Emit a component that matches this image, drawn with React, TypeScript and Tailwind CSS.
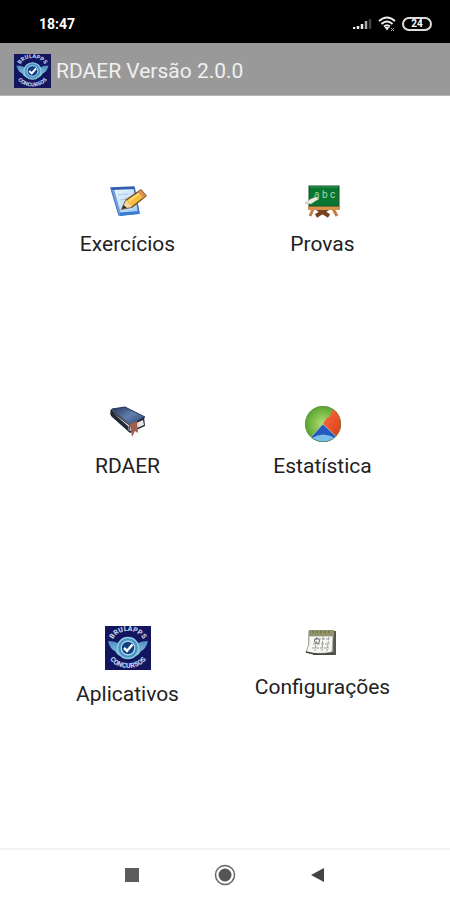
import type { ReactNode } from "react";

interface MenuItem {
    label: string;
    icon: ReactNode;
}

function AppLogo({ id, className }: { id: string; className: string }) {
    return (
        <svg viewBox="0 0 46 44" preserveAspectRatio="none" className={className} aria-hidden="true">
            <defs>
                <path id={`${id}-top`} d="M7 18 A16 13 0 0 1 39 18" />
                <path id={`${id}-bottom`} d="M3 27 A20 15 0 0 0 43 27" />
                <linearGradient id={`${id}-wing`} x1="0" y1="0" x2="0" y2="1">
                    <stop offset="0" stopColor="#4f8bc2" />
                    <stop offset="1" stopColor="#8dd0df" />
                </linearGradient>
            </defs>
            <rect width="46" height="44" fill="#14155f" />
            <path d="M3 15 Q10 15 15 18 L31 18 Q36 15 43 15 Q41 23 36 25 Q34 29 31 30 L15 30 Q12 29 10 25 Q5 23 3 15Z" fill={`url(#${id}-wing)`} />
            <circle cx="23" cy="22" r="10.500" fill="#4c91c5" stroke="#8bcbe1" strokeWidth="1.500" />
            <circle cx="23" cy="22" r="6.800" fill="#123f84" stroke="#b5e2ed" strokeWidth="1.200" />
            <path d="M19 22 L22 25 L27.500 18.500" fill="none" stroke="#fff" strokeWidth="2.500" />
            <text fill="#b4cdeb" className="font-[Roboto,sans-serif] text-[7px] font-black">
                <textPath href={`#${id}-top`} startOffset="50%" textAnchor="middle">BRULAPPS</textPath>
            </text>
            <text fill="#b4cdeb" className="font-[Roboto,sans-serif] text-[7px] font-black">
                <textPath href={`#${id}-bottom`} startOffset="50%" textAnchor="middle">CONCURSOS</textPath>
            </text>
        </svg>
    );
}

function NoteIcon() {
    return (
        <svg viewBox="0 0 40 40" className="size-10" aria-hidden="true">
            <defs>
                <linearGradient id="note" x1="0" y1="0" x2="1" y2="1">
                    <stop offset="0" stopColor="#f4faff" />
                    <stop offset="1" stopColor="#9ccbf8" />
                </linearGradient>
            </defs>
            <path d="M3 5 L26 4 L31 30 L11 32Z" fill="url(#note)" stroke="#3a64b8" strokeWidth="1.500" />
            <path d="M3 5 L6 6 L13 31 L11 32Z" fill="#6c9ddd" />
            <path d="M3 5 L26 4 L26.500 6 L4 7Z" fill="#315bae" />
            <path d="M12 29.500 L31 28 L31 31 L12 33Z" fill="#397bd2" />
            <path d="M10 12 L20 11 M12 17 L18 16" stroke="#b0c7dc" />
            <path d="M14 26 L18 17 L33 7 L38 13 L24 24Z" fill="#f6be3e" stroke="#775326" strokeWidth="1.400" />
            <path d="M18 17 L24 24 L14 26Z" fill="#f2d7a0" />
            <path d="M14 26 L15.500 22 L19 25Z" fill="#2b2b2b" />
            <path d="M33 7 L38 13 L35 15 L30 9Z" fill="#dd9150" />
            <path d="M21 18 L31 10.500" stroke="#ffe68e" strokeWidth="1.500" />
        </svg>
    );
}

function BoardIcon() {
    return (
        <svg viewBox="0 0 40 40" className="size-10" aria-hidden="true">
            <path d="M13 24 L27 33 M28 24 L14 33" stroke="#79421e" strokeWidth="4" />
            <path d="M12 24 L8 33 M30 24 L35 33" stroke="#c57c43" strokeWidth="3" />
            <rect x="6" y="23" width="32" height="4" fill="#d7924e" />
            <rect x="7" y="3" width="30" height="20" fill="#087631" stroke="#174e27" />
            <path d="M8 4 H36" stroke="#389658" />
            <text x="12" y="15" fill="#a5dcae" className="font-[Roboto,sans-serif] text-[10px]">a b c</text>
            <path d="M3 20 Q9 15 14 14 L17 16 Q13 18 9 21Z" fill="#eef0e4" stroke="#9ba78d" strokeWidth="0.600" />
        </svg>
    );
}

function BookIcon() {
    return (
        <svg viewBox="0 0 40 40" className="size-10" aria-hidden="true">
            <defs>
                <linearGradient id="cover" x1="0" y1="0" x2="1" y2="1">
                    <stop offset="0" stopColor="#25375b" />
                    <stop offset="0.500" stopColor="#607fae" />
                    <stop offset="1" stopColor="#273f6b" />
                </linearGradient>
            </defs>
            <path d="M3 4 Q1 9 4 12 L22 28 L37 21 L36 12Z" fill="#202736" />
            <path d="M5 8 L21 22 Q19 24 22 26 L36 20 L35 15 L22 21Z" fill="#e6e4e4" />
            <path d="M4 4 L17 2 L37 12 L22 20Z" fill="url(#cover)" stroke="#243352" />
            <path d="M4 5 L22 20 L21 26" fill="none" stroke="#555964" strokeWidth="1.500" />
            <path d="M22 19 L29 16 L30 28 L27 26 L24 32Z" fill="#a35d4c" />
        </svg>
    );
}

function PieIcon() {
    return (
        <svg viewBox="0 0 40 40" className="size-10" aria-hidden="true">
            <defs>
                <radialGradient id="pieGreen">
                    <stop offset="0" stopColor="#b6df77" />
                    <stop offset="1" stopColor="#57a52d" />
                </radialGradient>
                <linearGradient id="pieRed" x1="0" y1="0" x2="1" y2="1">
                    <stop offset="0" stopColor="#ff7042" />
                    <stop offset="1" stopColor="#d93a14" />
                </linearGradient>
            </defs>
            <circle cx="20" cy="19" r="18" fill="url(#pieGreen)" />
            <path d="M20 19 L23 14 L27 11 L30 4 A18 18 0 0 1 33 31.500Z" fill="url(#pieRed)" />
            <path d="M20 19 L33 31.500 A18 18 0 0 1 8 32Z" fill="#2459bd" />
            <path d="M9 33 Q20 26 32 33 Q20 40 9 33Z" fill="#79bde8" />
            <path d="M20 19 L33 31.500 M20 19 L8 32" stroke="#c7cec4" strokeWidth="0.700" />
            <circle cx="20" cy="19" r="17.600" fill="none" stroke="#668254" strokeOpacity="0.500" />
        </svg>
    );
}

function CalendarIcon() {
    return (
        <svg viewBox="0 0 40 40" className="size-10" aria-hidden="true">
            <path d="M8 5 H34 V29 H11Z" fill="#55574f" />
            <path d="M7 5 H31 V26 H7Z" fill="#eeeede" stroke="#77776a" />
            <rect x="7" y="4" width="25" height="6" fill="#929365" />
            <path d="M10 6 H29" stroke="#5e603f" strokeDasharray="2 2" />
            <path d="M7 10 H31 L30 26 Q15 29 4 26 Q8 19 7 10Z" fill="#f8f8f3" stroke="#96978d" strokeWidth="0.800" />
            <path d="M12 13 H28 M11 18 H28 M10 22 H27 M15 11 L13 25 M21 11 L20 25 M27 11 L25 25" stroke="#9a9b9a" strokeDasharray="3 1" />
            <circle cx="15" cy="15" r="2.500" fill="none" stroke="#696b77" />
            <path d="M4 26 Q17 30 31 27" fill="none" stroke="#45463f" strokeWidth="1.500" />
        </svg>
    );
}

function StatusBar() {
    return (
        <div className="flex h-[43px] items-center justify-between bg-black pt-1 pr-[18px] pl-[39px] text-white">
            <time className="text-sm font-bold">18:47</time>
            <div className="flex items-center gap-[6px]">
                <svg viewBox="0 0 19 12" className="h-3 w-[19px]" aria-hidden="true">
                    <path d="M1 11 V9 M5 11 V8 M9 11 V6" stroke="#eee" strokeWidth="2.500" />
                    <path d="M13 11 V3" stroke="#aaa" strokeWidth="2.500" />
                    <path d="M17 11 V1" stroke="#444" strokeWidth="2.500" />
                </svg>
                <svg viewBox="0 0 18 16" className="h-4 w-[18px]" aria-hidden="true">
                    <path d="M1 5 Q9 -2 17 5 M3.500 8 Q9 3 14.500 8 M6 10.500 Q9 8 12 10.500" fill="none" stroke="#eee" strokeWidth="2" />
                    <path d="M6.500 11 L9 14.500 L11.500 11Z" fill="#eee" />
                    <path d="M13 12 L16 15 M16 12 L13 15" stroke="#aaa" />
                </svg>
                <span className="flex h-[14px] w-[30px] items-center justify-center rounded-full border-2 border-[#ddd] text-[10px] leading-none font-bold">
                    24
                </span>
            </div>
        </div>
    );
}

const menu: MenuItem[] = [
    { label: "Exercícios", icon: <NoteIcon /> },
    { label: "Provas", icon: <BoardIcon /> },
    { label: "RDAER", icon: <BookIcon /> },
    { label: "Estatística", icon: <PieIcon /> },
    { label: "Aplicativos", icon: <AppLogo id="apps" className="mb-[3px] h-11 w-[46px]" /> },
    { label: "Configurações", icon: <CalendarIcon /> },
];

export default function App() {
    return (
        <div className="flex min-h-screen flex-col bg-white font-[Roboto,sans-serif]">
            <StatusBar />

            <header className="flex h-[53px] items-center gap-[5px] border-b border-[#b5b5b5] bg-[#999] px-[14px] pt-[3px]">
                <AppLogo id="header" className="h-[34px] w-[37px]" />
                <h1 className="text-[21px] leading-[26px] text-[#f0f0f0]">RDAER Versão 2.0.0</h1>
            </header>

            <main className="grid flex-1 grid-cols-2 grid-rows-3 px-[30px] pt-[87px]">
                {menu.map((item) => (
                    <button key={item.label} type="button" className="flex cursor-pointer flex-col items-center gap-2 self-start justify-self-center text-[#222]">
                        {item.icon}
                        <span className="text-[21px] leading-[26px]">{item.label}</span>
                    </button>
                ))}
            </main>

            {/* Android navigation buttons */}
            <nav className="flex h-[52px] items-center justify-center gap-[70px] border-t-2 border-[#f3f3f3]">
                <button type="button" aria-label="Recentes" className="flex size-6 items-center justify-center">
                    <svg viewBox="0 0 24 24" className="size-6"><rect x="6" y="5" width="14" height="14" fill="#5c5c5c" /></svg>
                </button>
                <button type="button" aria-label="Início" className="flex size-6 items-center justify-center">
                    <svg viewBox="0 0 24 24" className="size-6">
                        <circle cx="12" cy="12" r="9.500" fill="none" stroke="#666" strokeWidth="1.500" />
                        <circle cx="12" cy="12" r="6.500" fill="#555" />
                    </svg>
                </button>
                <button type="button" aria-label="Voltar" className="flex size-6 items-center justify-center">
                    <svg viewBox="0 0 24 24" className="size-6"><path d="M4 12 L17 5 V19Z" fill="#444" /></svg>
                </button>
            </nav>
        </div>
    );
}
